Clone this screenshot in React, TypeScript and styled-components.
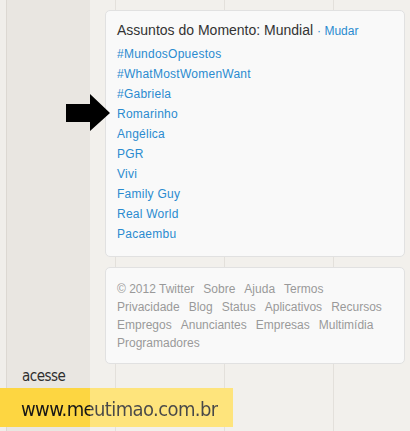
import React from "react";
import styled, { createGlobalStyle } from "styled-components";

const GlobalStyle = createGlobalStyle`
  html, body { margin: 0; padding: 0; }
  body { background: #f2f0ec; font-family: "Liberation Sans", Arial, sans-serif; }
`;

const Page = styled.div`
  position: relative;
  display: flex;
  width: 410px;
  height: 431px;
  overflow: hidden;
`;

const LeftRail = styled.div`
  flex: 0 0 90px;
  box-sizing: border-box;
  background: #e9e6e1;
  border-left: 6px solid #f0eeea;
  box-shadow: inset 1px 0 0 #dcd8d2;
`;

const Main = styled.div`
  flex: 1;
  display: flex;
  flex-direction: column;
  gap: 10px;
  padding: 10px 5px 0 15px;
  background-color: #f2f0ec;
  background-image:
    linear-gradient(to right, transparent 25px, #e3e0db 25px, #e3e0db 26px, transparent 26px),
    linear-gradient(to right, transparent 134px, #e3e0db 134px, #e3e0db 135px, transparent 135px),
    linear-gradient(to right, transparent 243px, #e3e0db 243px, #e3e0db 244px, transparent 244px);
`;

const Card = styled.div<{ $pad: string }>`
  box-sizing: border-box;
  width: 300px;
  background: #f9f9f9;
  border: 1px solid #e1e1e1;
  border-radius: 5px;
  padding: ${(p) => p.$pad};
`;

const Title = styled.div`
  font-size: 14px;
  line-height: 18px;
  color: #333;
  white-space: nowrap;
`;

const Change = styled.a`
  font-size: 12px;
  color: #2a8bd0;
  text-decoration: none;
  margin-left: 4px;
`;

const TrendList = styled.ul`
  list-style: none;
  margin: 4px 0 0;
  padding: 0;
`;

const Trend = styled.li`
  font-size: 12px;
  line-height: 20px;
  letter-spacing: 0.25px;
  color: #2a8bd0;
  white-space: nowrap;
`;

const FooterLinks = styled.div`
  display: flex;
  flex-wrap: wrap;
  column-gap: 9px;
  font-size: 12px;
  line-height: 18px;
  color: #999;
`;

const FooterItem = styled.span`
  white-space: nowrap;
`;

const Arrow = styled.svg`
  position: absolute;
  left: 66px;
  top: 94px;
`;

const Promo = styled.div`
  position: absolute;
  left: 0;
  top: 366px;
  display: flex;
  flex-direction: column;
  font-family: "DejaVu Sans Condensed", "DejaVu Sans", sans-serif;
  font-stretch: condensed;
`;

const PromoLabel = styled.div`
  padding-left: 22px;
  font-size: 15px;
  line-height: 20px;
  letter-spacing: -0.5px;
  color: #2e2e2e;
`;

const PromoBar = styled.div`
  width: 233px;
  height: 39px;
  box-sizing: border-box;
  margin-top: 2px;
  padding: 2px 0 0 21px;
  display: flex;
  align-items: center;
  background: linear-gradient(to right, #fdd641 90px, #fee47c 90px);
`;

const PromoUrl = styled.span`
  font-size: 20px;
  line-height: 24px;
  letter-spacing: -0.6px;
  background: linear-gradient(to right, #161616 69px, #484848 69px);
  -webkit-background-clip: text;
  background-clip: text;
  color: transparent;
`;

const trends = [
  "#MundosOpuestos",
  "#WhatMostWomenWant",
  "#Gabriela",
  "Romarinho",
  "Angélica",
  "PGR",
  "Vivi",
  "Family Guy",
  "Real World",
  "Pacaembu",
];

const footer = [
  "© 2012 Twitter",
  "Sobre",
  "Ajuda",
  "Termos",
  "Privacidade",
  "Blog",
  "Status",
  "Aplicativos",
  "Recursos",
  "Empregos",
  "Anunciantes",
  "Empresas",
  "Multimídia",
  "Programadores",
];

export default function App() {
  return (
    <>
      <GlobalStyle />
      <Page>
        <LeftRail />
        <Main>
          <Card $pad="10px 11px 12px">
            <Title>
              Assuntos do Momento: Mundial
              <Change href="#">· Mudar</Change>
            </Title>
            <TrendList>
              {trends.map((t) => (
                <Trend key={t}>{t}</Trend>
              ))}
            </TrendList>
          </Card>
          <Card $pad="12px 11px 11px">
            <FooterLinks>
              {footer.map((f) => (
                <FooterItem key={f}>{f}</FooterItem>
              ))}
            </FooterLinks>
          </Card>
        </Main>
        <Arrow width="45" height="38" viewBox="0 0 45 38">
          <polygon points="0,10 24,10 24,0 44,19 24,37 24,28 0,28" fill="#000" />
        </Arrow>
        <Promo>
          <PromoLabel>acesse</PromoLabel>
          <PromoBar>
            <PromoUrl>www.meutimao.com.br</PromoUrl>
          </PromoBar>
        </Promo>
      </Page>
    </>
  );
}
